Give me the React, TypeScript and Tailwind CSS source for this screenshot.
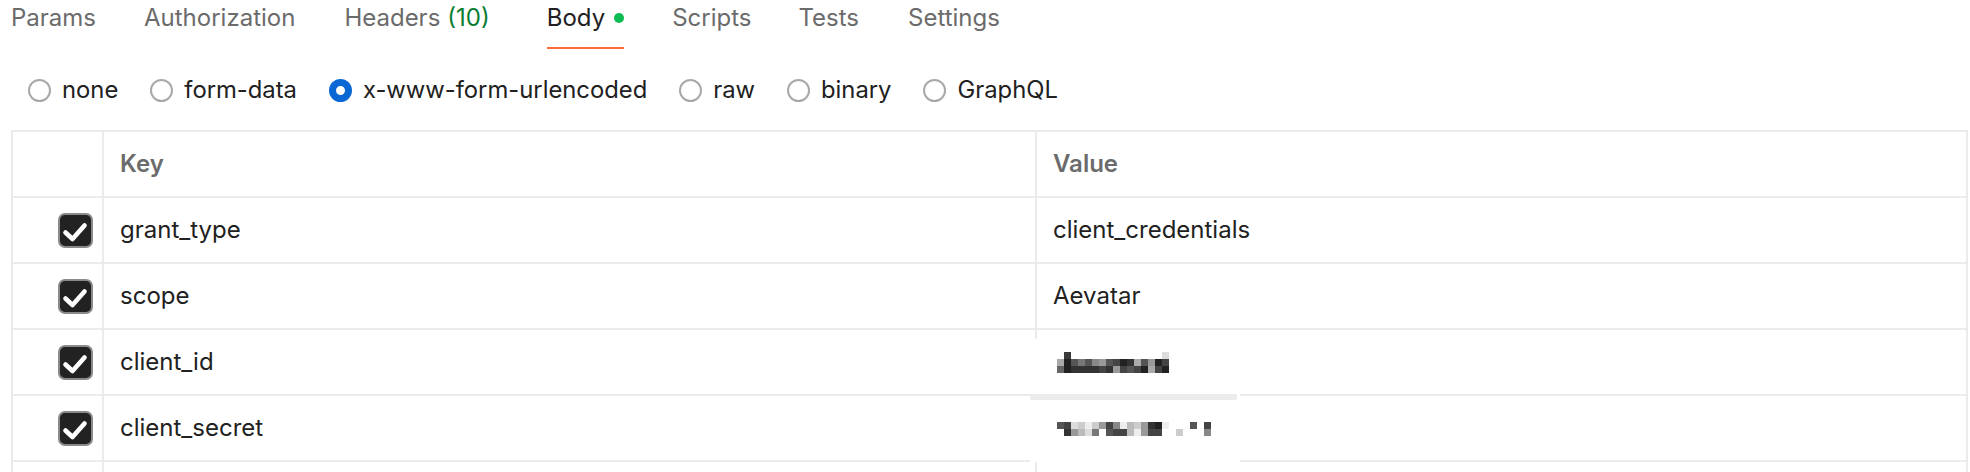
import React from 'react';

// tabs above the body editor
const tabs = [
  { label: 'Params', mr: 'mr-[48px]' },
  { label: 'Authorization', mr: 'mr-[49px]' },
  { label: 'Headers', count: '(10)', mr: 'mr-[57px]' },
  { label: 'Body', active: true, mr: 'mr-[46px]' },
  { label: 'Scripts', mr: 'mr-[47px]' },
  { label: 'Tests', mr: 'mr-[49px]' },
  { label: 'Settings', mr: '' },
];

const bodyTypes = ['none', 'form-data', 'x-www-form-urlencoded', 'raw', 'binary', 'GraphQL'];

const rows = [
  { key: 'grant_type', value: 'client_credentials' },
  { key: 'scope', value: 'Aevatar' },
  { key: 'client_id', value: '' },
  { key: 'client_secret', value: '' },
];

// pixelated (redacted) values
const W = '#ffffff';
const idBlocks = [
  [W, '#3a3a3a', W, W, W, W, W, W, W, W, W, W, W, W, W, '#dddddd'],
  ['#aaaaaa', '#222222', '#555555', '#777777', '#555555', '#888888', '#999999', '#555555', '#444444', '#222222', '#333333', '#aaaaaa', '#555555', '#999999', '#222222', '#444444'],
  ['#666666', '#222222', '#333333', '#333333', '#333333', '#333333', '#444444', '#333333', '#999999', '#444444', '#555555', '#444444', '#222222', '#aaaaaa', '#444444', '#222222'],
];
const secretBlocks = [
  ['#555555', '#444444', '#dddddd', '#cccccc', '#eeeeee', '#cccccc', '#999999', '#444444', '#888888', '#eeeeee', '#bbbbbb', '#cccccc', '#999999', '#333333', '#222222', '#eeeeee', W, W, W, '#555555', W, '#444444'],
  [W, '#333333', '#999999', '#bbbbbb', '#dddddd', '#777777', W, '#555555', '#444444', '#444444', '#bbbbbb', '#eeeeee', '#999999', '#444444', '#444444', W, W, '#cccccc', W, W, W, '#888888'],
];

const Mosaic = ({ blocks }: { blocks: string[][] }) => (
  <div className="flex flex-col">
    {blocks.map((line, i) => (
      <div key={i} className="flex">
        {line.map((c, j) => (
          <div key={j} className="w-[7px] h-[7px]" style={{ backgroundColor: c }} />
        ))}
      </div>
    ))}
  </div>
);

const Check = () => (
  <div className="w-[35px] h-[35px] rounded-[7px] bg-[#222222] border-[2px] border-[#8a8a8a] flex items-center justify-center">
    <svg width="31" height="31" viewBox="0 0 31 31">
      <path d="M5.5 17.5 L12.5 24 L24.5 10.5" fill="none" stroke="#ffffff" strokeWidth="4.6" strokeLinecap="round" strokeLinejoin="round" />
    </svg>
  </div>
);

export default function App() {
  return (
    <div className="w-[1970px] h-[472px] overflow-hidden bg-white font-['Inter',sans-serif] text-[24px]">
      {/* Tabs */}
      <div className="flex h-[50px] pl-[11px]">
        {tabs.map((t) => (
          <div key={t.label} className={`flex flex-col justify-between pt-[3px] ${t.mr} ${t.active ? '-ml-[2px] px-[2px]' : ''}`}>
            <div className="flex items-center leading-[30px] whitespace-nowrap">
              <span className={t.active ? 'text-[#212121]' : 'text-[#6b6b6b]'}>{t.label}</span>
              {t.count && <span className="ml-[7px] text-[#0a7d33]">{t.count}</span>}
              {t.active && <span className="ml-[9px] w-[10px] h-[10px] rounded-full bg-[#0cbb52]" />}
            </div>
            <div className={`h-[2px] mb-[1px] ${t.active ? 'bg-[#ff6c37]' : 'bg-transparent'}`} />
          </div>
        ))}
      </div>

      {/* Body type radios */}
      <div className="flex items-center h-[80px] pl-[28px] text-[23.8px]">
        {bodyTypes.map((b) => {
          const on = b === 'x-www-form-urlencoded';
          return (
            <div key={b} className="flex items-center gap-[11px] mr-[32px]">
              <span
                className={
                  on
                    ? 'w-[23px] h-[23px] rounded-full border-[7px] border-[#0b67d4]'
                    : 'w-[23px] h-[23px] rounded-full border-[2px] border-[#a8a8a8]'
                }
              />
              <span className="text-[#212121] leading-[30px]">{b}</span>
            </div>
          );
        })}
      </div>

      {/* Key / value table */}
      <div className="relative ml-[11px] w-[1957px] border-l-2 border-t-2 border-[#ebebeb]">
        <div className="grid grid-cols-[91px_933px_931px]">
          <div className="h-[66px] border-r-2 border-b-2 border-[#ebebeb]" />
          <div className="h-[66px] border-r-2 border-b-2 border-[#ebebeb] flex items-center pl-[16px] font-semibold text-[#6b6b6b]">Key</div>
          <div className="h-[66px] border-r-2 border-b-2 border-[#ebebeb] flex items-center pl-[16px] font-semibold text-[#6b6b6b]">Value</div>

          {rows.map((r) => (
            <React.Fragment key={r.key}>
              <div className="h-[66px] border-r-2 border-b-2 border-[#ebebeb] flex items-center justify-end pr-[9px]">
                <Check />
              </div>
              <div className="h-[66px] border-r-2 border-b-2 border-[#ebebeb] flex items-center pl-[16px] text-[#212121]">{r.key}</div>
              <div className="h-[66px] border-r-2 border-b-2 border-[#ebebeb] flex items-center pl-[16px] text-[#212121]">{r.value}</div>
            </React.Fragment>
          ))}

          <div className="h-[66px] border-r-2 border-b-2 border-[#ebebeb]" />
          <div className="h-[66px] border-r-2 border-b-2 border-[#ebebeb]" />
          <div className="h-[66px] border-r-2 border-b-2 border-[#ebebeb]" />
        </div>

        {/* redacted client_id / client_secret */}
        <div className="absolute left-[1017px] top-[207px] w-[210px] h-[123px] bg-white">
          <div className="ml-[27px] mt-[13px]">
            <Mosaic blocks={idBlocks} />
          </div>
          <div className="mt-[21px] h-[6px] w-[207px] bg-[#ececec]" />
          <div className="ml-[27px] mt-[22px]">
            <Mosaic blocks={secretBlocks} />
          </div>
        </div>
      </div>
    </div>
  );
}
